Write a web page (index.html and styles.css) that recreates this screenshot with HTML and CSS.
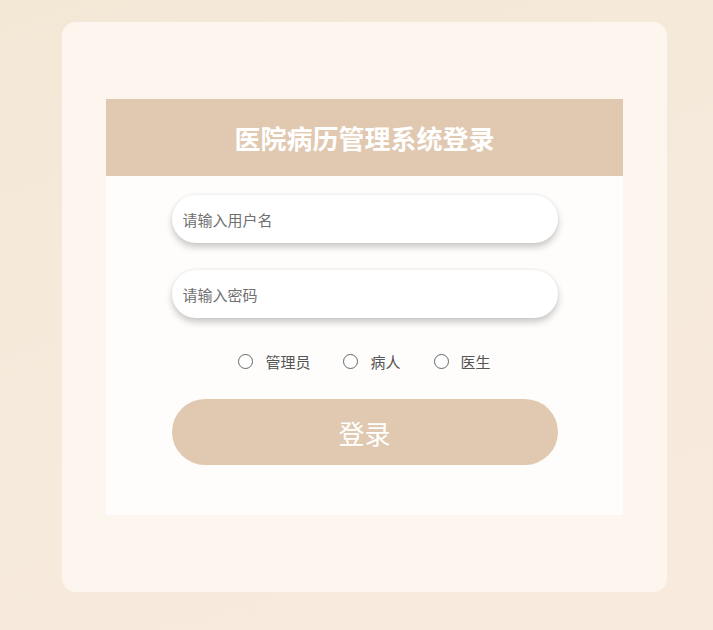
FILE: index.html
```html
<!DOCTYPE html>
<html lang="zh-CN">
<head>
  <meta charset="UTF-8">
  <title>医院病历管理系统登录</title>
  <link rel="stylesheet" href="styles.css">
</head>
<body>
  <div class="wrap">
    <div class="card">
      <div class="panel">
        <div class="panel-head">
          <h1>医院病历管理系统登录</h1>
        </div>

        <form class="login-form" onsubmit="return false">
          <input type="text" class="field" placeholder="请输入用户名">
          <input type="password" class="field" placeholder="请输入密码">

          <div class="roles">
            <label class="role"><input type="radio" name="role" value="admin"><span>管理员</span></label>
            <label class="role"><input type="radio" name="role" value="patient"><span>病人</span></label>
            <label class="role"><input type="radio" name="role" value="doctor"><span>医生</span></label>
          </div>

          <button type="submit" class="login-btn">登录</button>
        </form>
      </div>
    </div>
  </div>
</body>
</html>
```

FILE: styles.css
```css
body {
  margin: 0;
  min-height: 630px;
  font-family: "Noto Sans CJK SC", "Noto Sans", sans-serif;
  background: linear-gradient(160deg, #f3e7d6 0%, #f6eadc 50%, #f8ebdd 100%);
}

.wrap {
  padding: 22px 46px 38px 62px;
}

/* outer soft card */
.card {
  width: 517px;
  height: 416px;
  padding: 77px 44px;
  background: #fdf6ef;
  border-radius: 14px;
}

.panel {
  height: 100%;
  background: #fffdfb;
}

.panel-head {
  height: 77px;
  display: flex;
  align-items: center;
  justify-content: center;
  background: #e0c9b0;
}

.panel-head h1 {
  margin: 0;
  font-size: 26px;
  font-weight: 700;
  color: #fff;
}

.login-form {
  display: flex;
  flex-direction: column;
  align-items: center;
  padding-top: 19px;
}

.field {
  box-sizing: border-box;
  width: 386px;
  height: 48px;
  margin-bottom: 27px;
  padding: 0 11px;
  border: none;
  border-radius: 24px;
  background: #fff;
  font-family: inherit;
  font-size: 15px;
  color: #333;
  outline: none;
  box-shadow: 0 4px 7px rgba(0, 0, 0, 0.22), 0 -1px 3px rgba(0, 0, 0, 0.04);
}

.field::placeholder {
  color: #707070;
}

.roles {
  display: flex;
  gap: 33px;
  margin-top: 6px;
  height: 20px;
  align-items: center;
}

.role {
  display: flex;
  align-items: center;
  gap: 12px;
  font-size: 15px;
  color: #555;
}

.role input {
  appearance: none;
  margin: 0;
  width: 15px;
  height: 15px;
  border: 1px solid #666;
  border-radius: 50%;
  background: #fff;
}

.role input:checked {
  background: radial-gradient(#666 40%, #fff 45%);
}

.login-btn {
  width: 386px;
  height: 66px;
  margin-top: 28px;
  border: none;
  border-radius: 33px;
  background: #e0c9b0;
  color: #fff;
  font-family: inherit;
  font-size: 26px;
  cursor: pointer;
}
```
